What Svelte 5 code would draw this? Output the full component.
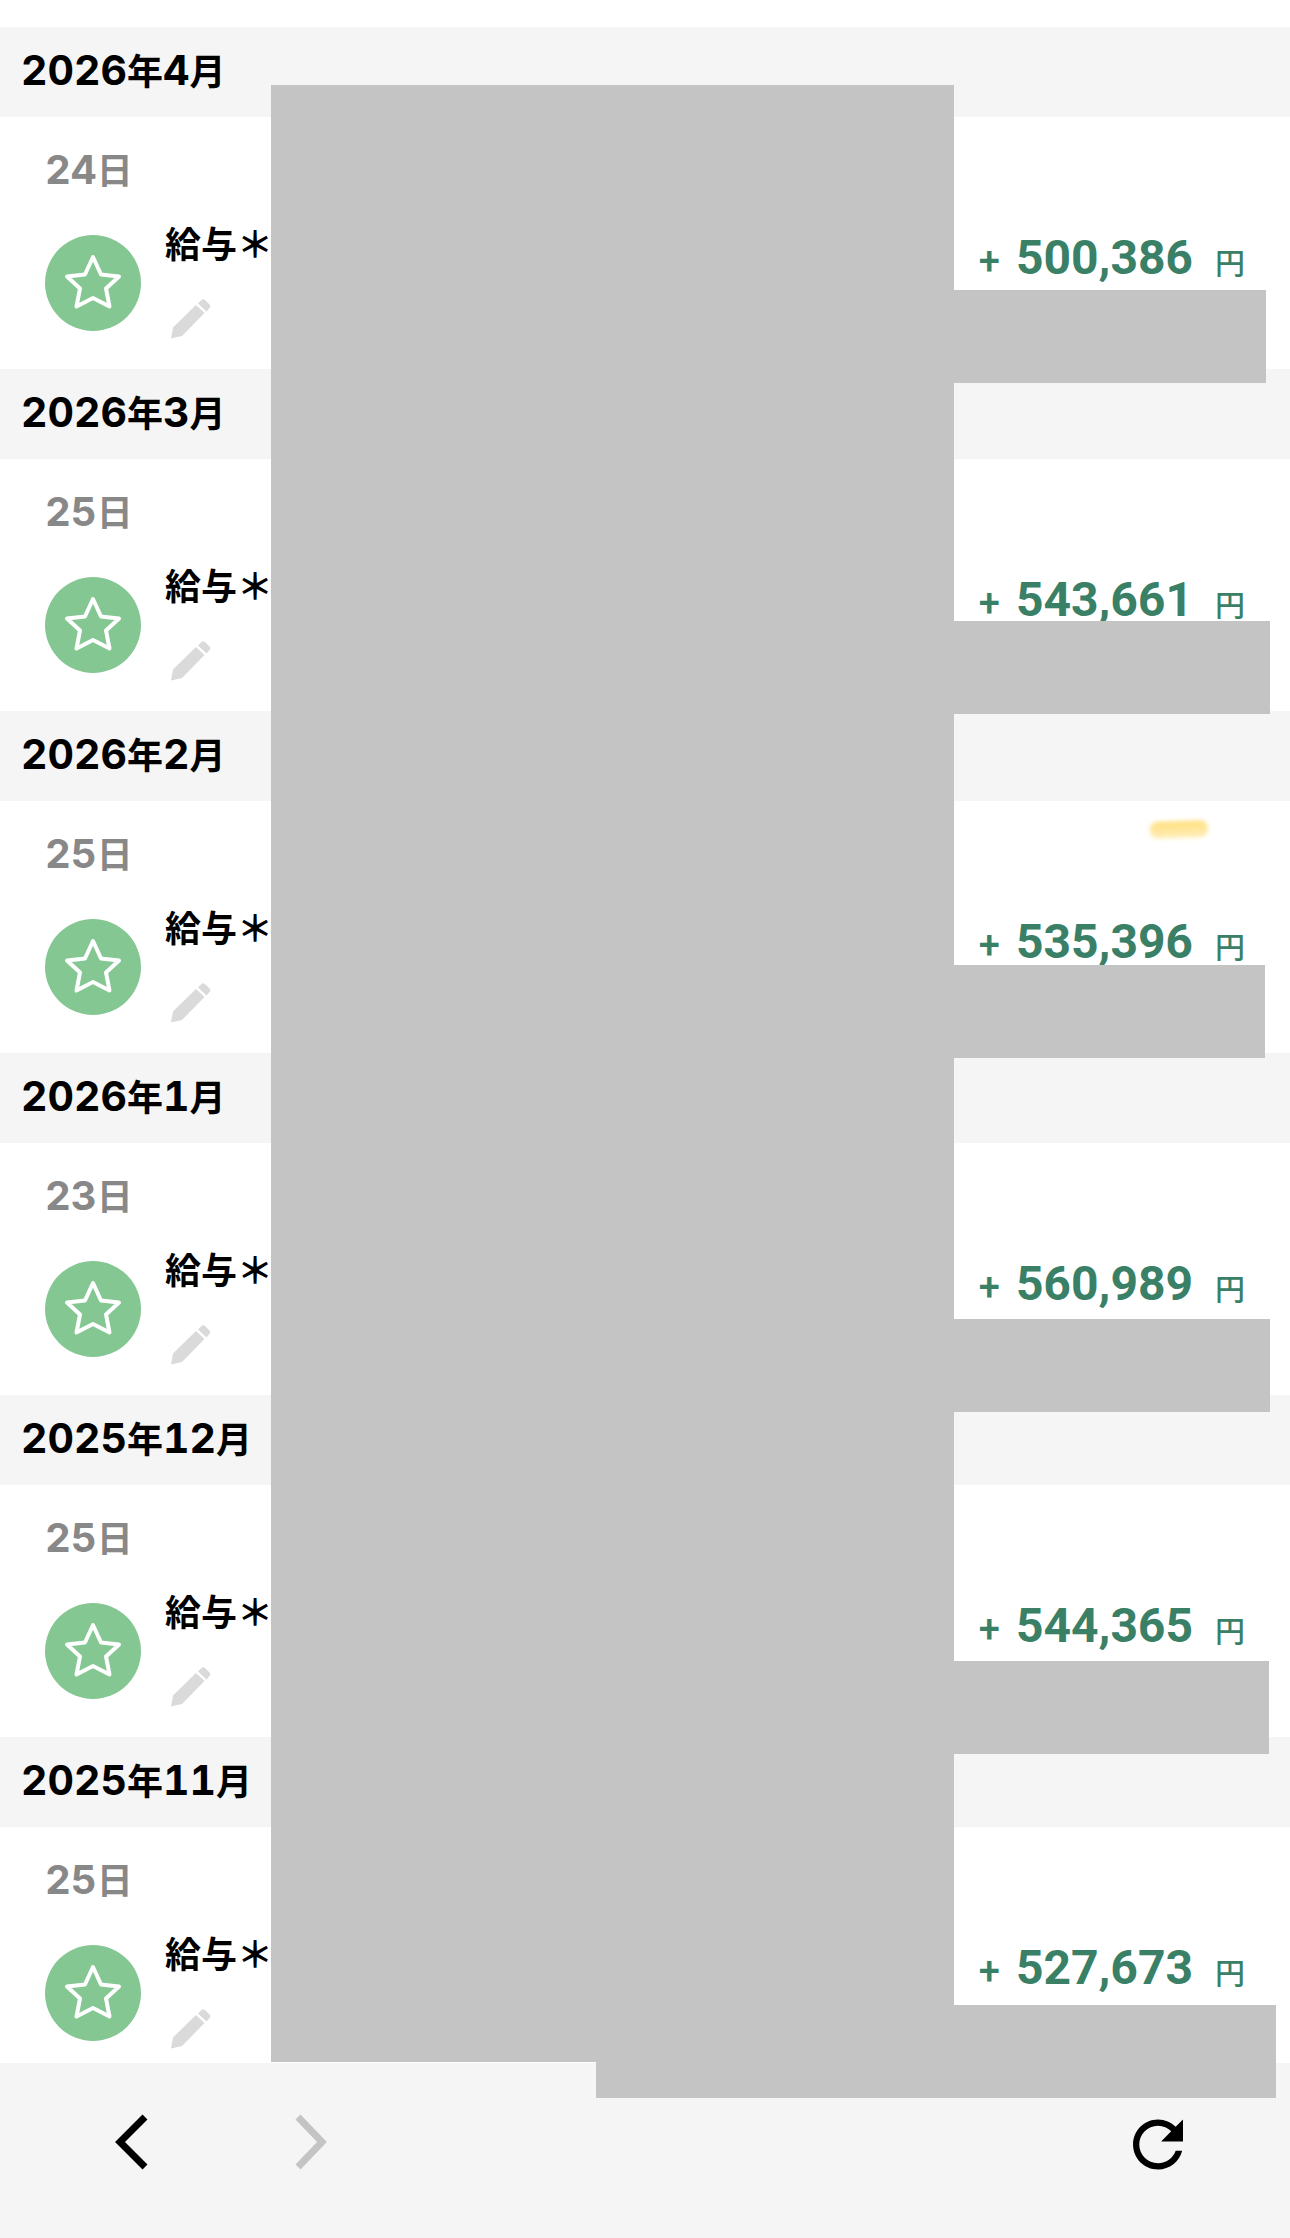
<script>
    const months = [
        { year: 2026, month: 4, day: 24, amount: "500,386" },
        { year: 2026, month: 3, day: 25, amount: "543,661" },
        { year: 2026, month: 2, day: 25, amount: "535,396", marked: true },
        { year: 2026, month: 1, day: 23, amount: "560,989" },
        { year: 2025, month: 12, day: 25, amount: "544,365" },
        { year: 2025, month: 11, day: 25, amount: "527,673" },
    ];

    // grey masks lying over the private parts of the list
    const masks = [
        { top: 85, left: 271, right: 336, height: 1977 },
        { top: 290, left: 900, right: 24, height: 93 },
        { top: 621, left: 900, right: 20, height: 93 },
        { top: 965, left: 900, right: 25, height: 93 },
        { top: 1319, left: 900, right: 20, height: 93 },
        { top: 1661, left: 900, right: 21, height: 93 },
        { top: 2005, left: 596, right: 14, height: 93 },
    ];
</script>

<div class="page">
    <main>
        {#each months as item}
            <section>
                <h2>
                    {item.year}<span class="kanji">年</span>{item.month}<span
                        class="kanji">月</span
                    >
                </h2>
                <div class="entry">
                    {#if item.marked}
                        <span class="marker"></span>
                    {/if}
                    <p class="day">{item.day}<span class="kanji">日</span></p>
                    <div class="row">
                        <span class="badge">
                            <svg viewBox="0 0 96 96" aria-hidden="true">
                                <path
                                    d="M48 22L56 39.500L74 41.500L61 53.500L64.500 71.500L48 63L31.500 71.500L35 53.500L22 41.500L40 39.500Z"
                                />
                            </svg>
                        </span>
                        <div class="detail">
                            <span class="title">給与＊</span>
                            <button class="edit" aria-label="編集">
                                <svg viewBox="0 0 40 40" aria-hidden="true">
                                    <path
                                        d="M0 39.500L2 28.500L25 6L33.500 14L11 37Z"
                                    />
                                    <path
                                        d="M27 4.500L30.500 1Q32 -0.500 34 1L38.500 5.500Q40 7 38.500 9L35.500 12.500Z"
                                    />
                                </svg>
                            </button>
                        </div>
                        <p class="amount">
                            <span class="sign">+</span>
                            <strong>{item.amount}</strong>
                            <span class="yen">円</span>
                        </p>
                    </div>
                </div>
            </section>
        {/each}
    </main>

    <nav>
        <button aria-label="戻る">
            <svg viewBox="0 0 80 80" aria-hidden="true">
                <path class="chevron" d="M53 15L28 40L53 65" />
            </svg>
        </button>
        <button aria-label="進む" disabled>
            <svg viewBox="0 0 80 80" aria-hidden="true">
                <path class="chevron" d="M26 15L50 40L26 65" />
            </svg>
        </button>
        <button class="reload" aria-label="再読み込み">
            <svg viewBox="-0.8 -1.600 25.600 25.600" aria-hidden="true">
                <path
                    d="M17.650 6.350C16.200 4.900 14.210 4 12 4c-4.420 0-7.990 3.580-7.990 8s3.570 8 7.990 8c3.730 0 6.840-2.550 7.730-6h-2.080c-.82 2.330-3.040 4-5.650 4-3.310 0-6-2.690-6-6s2.690-6 6-6c1.660 0 3.140.69 4.220 1.780L13 11h7V4l-2.350 2.350z"
                />
            </svg>
        </button>
    </nav>

    {#each masks as mask}
        <div
            class="mask"
            style="top: {mask.top}px; left: {mask.left}px; right: {mask.right}px; height: {mask.height}px"
        ></div>
    {/each}
</div>

<style>
    :global(body) {
        margin: 0;
        background-color: #fff;
    }

    .page {
        position: relative;
        padding-top: 27px;
        overflow: hidden;
        font-family: Inter, "Noto Sans CJK JP", sans-serif;
        font-variant-numeric: tabular-nums;
        color: #000;
    }

    h2,
    p {
        margin: 0;
    }

    h2 {
        padding: 18px 21px 22px;
        font-size: 41px;
        line-height: 50px;
        font-weight: 700;
        background-color: #f5f5f5;
    }

    .kanji {
        font-size: 36px;
        line-height: 36px;
    }

    .entry {
        position: relative;
        padding: 29px 45px 30px;
    }

    section:last-child .entry {
        padding-bottom: 14px;
    }

    .day {
        font-size: 40px;
        line-height: 48px;
        font-weight: 700;
        color: #888;
    }

    .row {
        display: flex;
        align-items: center;
        gap: 24px;
        margin-top: 33px;
    }

    .badge {
        width: 96px;
        height: 96px;
        border-radius: 50%;
        background-color: #84c793;
    }

    .badge path {
        fill: none;
        stroke: #fff;
        stroke-width: 4;
        stroke-linejoin: round;
    }

    .detail {
        display: flex;
        flex-direction: column;
        gap: 36px;
    }

    .title {
        font-size: 36px;
        line-height: 36px;
        font-weight: 700;
    }

    svg {
        display: block;
        width: 100%;
        height: 100%;
    }

    button {
        padding: 0;
        border: none;
        background: none;
    }

    .edit {
        width: 40px;
        height: 40px;
        margin-left: 6px;
    }

    .edit path {
        fill: #dadada;
    }

    .amount {
        display: flex;
        align-items: baseline;
        align-self: flex-start;
        margin-left: auto;
        line-height: 62px;
        font-family: Roboto, "Noto Sans CJK JP", sans-serif;
        color: #3a8066;
    }

    .amount strong {
        margin: 0 22px 0 16px;
        font-size: 48px;
        font-weight: 700;
    }

    .sign {
        font-size: 38px;
        font-weight: 500;
    }

    .yen {
        font-size: 30px;
        font-weight: 500;
    }

    /* highlighter stroke */
    .marker {
        position: absolute;
        top: 20px;
        right: 82px;
        width: 58px;
        height: 17px;
        border-radius: 8px;
        background: linear-gradient(#ffdf7c, #ffeebb);
        transform: rotate(-2deg);
        filter: blur(2px);
    }

    nav {
        display: flex;
        gap: 100px;
        padding: 39px 92px 56px;
        background-color: #f5f5f5;
    }

    nav button {
        width: 80px;
        height: 80px;
    }

    .reload {
        margin-left: auto;
    }

    .chevron {
        fill: none;
        stroke: #000;
        stroke-width: 7;
    }

    button:disabled .chevron {
        stroke: #c4c4c4;
    }

    .mask {
        position: absolute;
        background-color: #c4c4c4;
    }
</style>
